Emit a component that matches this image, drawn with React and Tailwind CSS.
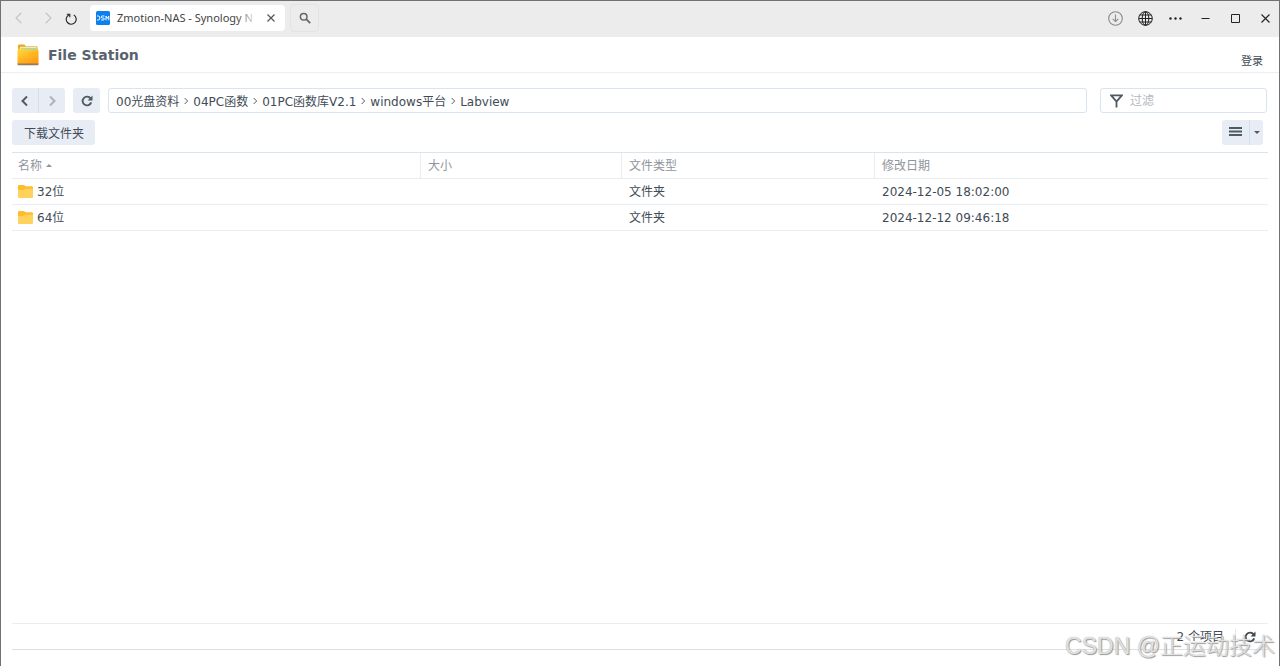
import React, { useState } from "react";

const crumbs = ["00光盘资料", "04PC函数", "01PC函数库V2.1", "windows平台", "Labview"];

const columns = [
  { name: "名称", width: "w-[409px]", sorted: true },
  { name: "大小", width: "w-[201px]" },
  { name: "文件类型", width: "w-[253px]" },
  { name: "修改日期", width: "" },
];

const files = [
  { name: "32位", size: "", type: "文件夹", modified: "2024-12-05 18:02:00" },
  { name: "64位", size: "", type: "文件夹", modified: "2024-12-12 09:46:18" },
];

function Chevron({ left, className }) {
  return (
    <svg viewBox="0 0 12 12" className={className} fill="none" stroke="currentColor" aria-hidden="true">
      <path d={left ? "M8 1.5 3.5 6 8 10.5" : "M4 1.5 8.5 6 4 10.5"} />
    </svg>
  );
}

function RefreshIcon({ className }) {
  return (
    <svg viewBox="0 0 12 12" className={className} aria-hidden="true">
      <path d="M9.6 3.4A4.4 4.4 0 1 0 10.2 7.4" fill="none" stroke="currentColor" strokeWidth="1.9" />
      <path d="M11.5.6v4.9H6.6z" fill="currentColor" />
    </svg>
  );
}

function FileStationLogo() {
  return (
    <svg viewBox="0 0 22 22" className="h-[22px] w-[22px] shrink-0" aria-hidden="true">
      <defs>
        <linearGradient id="folderFront" x1="0" y1="0" x2="0.6" y2="1">
          <stop offset="0" stopColor="#ffdb3d" />
          <stop offset="1" stopColor="#ff9d14" />
        </linearGradient>
      </defs>
      <path d="M1 2q0-1.4 1.3-1.4h5L9 2.3h10.4q1.2 0 1.2 1.3V12H1z" fill="#f5a51b" />
      <path d="M3 2.8h16.6V8H3z" fill="#e6f3d6" />
      <path d="M4 3.9h15.6V8H4z" fill="#9ed8bd" />
      <path d="M.5 6Q.5 4.700 1.700 4.700h6.100l1.500.6h10.900q1.300 0 1.300 1.300V20H.5z" fill="url(#folderFront)" />
      <path d="M.5 19.600h21v.6q0 1-1.200 1H1.700q-1.200 0-1.200-1z" fill="#94795a" />
    </svg>
  );
}

function FolderIcon() {
  return (
    <svg viewBox="0 0 15 13" className="h-[13px] w-[15px] shrink-0" aria-hidden="true">
      <path d="M0 1q0-1 1-1h5l1.600 1.300H14q1 0 1 1V12H0z" fill="#ffbd2e" />
      <path d="M0 5h5.500l1.200-1.200H15V12q0 1-1 1H1q-1 0-1-1z" fill="#ffd25c" />
    </svg>
  );
}

function BrowserBar() {
  return (
    <header className="flex h-9 shrink-0 items-center bg-[#ececec] pr-1.5 pb-0.5 pl-3 text-[#222]">
      <button type="button" aria-label="后退" className="flex w-3 justify-center text-[#c4c4c4]">
        <Chevron left className="h-3.5 w-3.5 shrink-0" />
      </button>
      <button type="button" aria-label="前进" className="ml-[17px] flex w-3 justify-center text-[#c4c4c4]">
        <Chevron className="h-3.5 w-3.5 shrink-0" />
      </button>
      <button type="button" aria-label="刷新" className="ml-[11px] flex w-3 justify-center pt-0.5">
        <svg viewBox="0 0 12 12" className="h-3 w-3" fill="none" stroke="currentColor" strokeWidth="1.1" aria-hidden="true">
          <path d="M4.200 1.700A5 5 0 1 0 8.800 2" />
          <path d="M1.800 1.300h3v3" />
        </svg>
      </button>

      <div className="ml-[13px] flex h-[26px] w-[195px] items-center rounded-sm bg-white pr-2 pl-1.5">
        <svg viewBox="0 0 14 14" className="h-3.5 w-3.5 shrink-0" aria-hidden="true">
          <rect width="14" height="14" rx="1.500" fill="#0b80ee" />
          <path
            d="M1 5h1.400q1.500 0 1.500 2T2.400 9H1M8.400 5H6.300q-1 0-1 1t1 1h1q1 0 1 1t-1 1H5.200M10 9.300V5l1.400 2.400L12.800 5v4.300"
            fill="none"
            stroke="#fff"
            strokeWidth="1"
          />
        </svg>
        <span className="relative ml-[7px] flex-1 overflow-hidden font-['Noto_Sans','Noto_Sans_CJK_SC',sans-serif] text-[11px] whitespace-nowrap text-[#444]">
          Zmotion-NAS - Synology N
          <span className="absolute inset-y-0 right-0 w-5 bg-linear-to-r from-white/0 to-white" />
        </span>
        <button type="button" aria-label="关闭标签页" className="ml-2 text-[#555]">
          <svg viewBox="0 0 12 12" className="h-3 w-3" fill="none" stroke="currentColor" strokeWidth="1.200" aria-hidden="true">
            <path d="m2.500 2.500 7 7m0-7-7 7" />
          </svg>
        </button>
      </div>
      <button
        type="button"
        aria-label="搜索"
        className="ml-[5px] flex h-7 w-[29px] items-center justify-center rounded-sm border border-[#e3e3e3] text-[#666]"
      >
        <svg viewBox="0 0 12 12" className="h-3 w-3" fill="none" stroke="currentColor" aria-hidden="true">
          <circle cx="4.700" cy="4.700" r="3.300" strokeWidth="1.500" />
          <path d="m7.200 7.200 4 4" strokeWidth="1.800" />
        </svg>
      </button>

      <div className="ml-auto flex items-center gap-[15px]">
        <button type="button" aria-label="下载" className="text-[#8a8a8a]">
          <svg viewBox="0 0 15 15" className="h-[15px] w-[15px]" fill="none" stroke="currentColor" strokeWidth="1.100" aria-hidden="true">
            <circle cx="7.500" cy="7.500" r="6.800" />
            <path d="M7.500 3.500v7M4.700 7.900l2.800 2.700 2.800-2.700" />
          </svg>
        </button>
        <button type="button" aria-label="语言">
          <svg viewBox="0 0 15 15" className="h-[15px] w-[15px]" fill="none" stroke="currentColor" strokeWidth="1" aria-hidden="true">
            <circle cx="7.500" cy="7.500" r="6.800" />
            <ellipse cx="7.500" cy="7.500" rx="3.300" ry="6.800" />
            <path d="M7.500.8v13.400M.8 7.500h13.400M1.800 4h11.400M1.800 11h11.400" />
          </svg>
        </button>
        <button type="button" aria-label="更多">
          <svg viewBox="0 0 15 15" className="h-[15px] w-[15px]" fill="currentColor" aria-hidden="true">
            <circle cx="2.500" cy="7.500" r="1.200" />
            <circle cx="7.500" cy="7.500" r="1.200" />
            <circle cx="12.500" cy="7.500" r="1.200" />
          </svg>
        </button>
        <button type="button" aria-label="最小化">
          <svg viewBox="0 0 15 15" className="h-[15px] w-[15px]" stroke="currentColor" aria-hidden="true">
            <path d="M3.500 7.500h8" />
          </svg>
        </button>
        <button type="button" aria-label="最大化">
          <svg viewBox="0 0 15 15" className="h-[15px] w-[15px]" fill="none" stroke="currentColor" aria-hidden="true">
            <path d="M3.500 3.500h8v8h-8z" />
          </svg>
        </button>
        <button type="button" aria-label="关闭">
          <svg viewBox="0 0 15 15" className="h-[15px] w-[15px]" stroke="currentColor" strokeWidth="1.100" aria-hidden="true">
            <path d="m3.500 3.500 8 8m0-8-8 8" />
          </svg>
        </button>
      </div>
    </header>
  );
}

function Toolbar() {
  const [filter, setFilter] = useState("");

  return (
    <div className="shrink-0 pt-[15px]">
      <div className="flex h-[25px] items-stretch pr-px">
        <div className="flex overflow-hidden rounded-[3px] bg-[#e8edf5]">
          <button type="button" aria-label="上一个" className="flex w-[27px] items-center justify-center border-r border-[#d6dfe9] text-[#505a64]">
            <Chevron left className="h-3 w-3 stroke-2" />
          </button>
          <button type="button" aria-label="下一个" className="flex w-[26px] items-center justify-center text-[#abb3be]">
            <Chevron className="h-3 w-3 stroke-2" />
          </button>
        </div>
        <button type="button" aria-label="重新载入" className="ml-2 flex w-[27px] items-center justify-center rounded-[3px] bg-[#e8edf5] text-[#505a64]">
          <RefreshIcon className="h-3 w-3" />
        </button>

        <nav aria-label="路径" className="ml-2 flex min-w-0 flex-1 items-center rounded-[3px] border border-[#d9e4ee] pl-[7px]">
          {crumbs.map((crumb, i) => (
            <React.Fragment key={crumb}>
              {i > 0 && <Chevron className="mx-[3px] h-2 w-2 stroke-[1.5] text-[#505a64]" />}
              <a href="#" className="pt-0.5 whitespace-nowrap">
                {crumb}
              </a>
            </React.Fragment>
          ))}
        </nav>

        <label className="ml-[13px] flex w-[167px] items-center rounded-[3px] border border-[#d9e4ee] pl-[9px]">
          <svg viewBox="0 0 13 14" className="h-3.5 w-[13px] shrink-0" fill="none" stroke="#505a64" strokeWidth="1.800" aria-hidden="true">
            <path d="M1.200 1.400h10.600L6.500 7.600zM6.500 7v6.500" />
          </svg>
          <input
            type="text"
            aria-label="过滤"
            placeholder="过滤"
            value={filter}
            onChange={(e) => setFilter(e.target.value)}
            className="ml-[7px] w-full min-w-0 bg-transparent outline-none placeholder:text-[#b4b9bf]"
          />
        </label>
      </div>

      <div className="mt-[7px] flex h-[25px] items-stretch justify-between pr-[5px]">
        <button type="button" className="rounded-[3px] bg-[#e8edf5] pt-0.5 pr-[11px] pl-3">
          下载文件夹
        </button>
        <div className="flex overflow-hidden rounded-[3px] bg-[#e8edf5]">
          <button type="button" aria-label="列表视图" className="flex w-7 items-center justify-center border-r border-[#d6dfe9] pb-0.5">
            <svg viewBox="0 0 13 9" className="h-[9px] w-[13px]" fill="#505a64" aria-hidden="true">
              <path d="M0 0h13v2H0zM0 3.500h13v2H0zM0 7h13v2H0z" />
            </svg>
          </button>
          <button type="button" aria-label="视图选项" className="flex w-[13px] items-center justify-center">
            <svg viewBox="0 0 6 3" className="h-[3px] w-1.5" fill="#505a64" aria-hidden="true">
              <path d="M0 0h6L3 3z" />
            </svg>
          </button>
        </div>
      </div>
    </div>
  );
}

function FileTable() {
  return (
    <table className="mt-[7px] w-full table-fixed border-separate border-spacing-0 border-t border-[#d9e4ec] text-left">
      <thead>
        <tr className="h-[26px] text-[#8f959b]">
          {columns.map(({ name, width, sorted }) => (
            <th
              key={name}
              scope="col"
              aria-sort={sorted ? "ascending" : undefined}
              className={`${width} border-r border-b border-[#e8edf2] px-[7px] py-0 font-normal first:pl-1.5 last:border-r-0`}
            >
              <span className="flex items-center gap-1">
                {name}
                {sorted && (
                  <svg viewBox="0 0 6 3" className="h-[3px] w-1.5" fill="currentColor" aria-hidden="true">
                    <path d="M0 3h6L3 0z" />
                  </svg>
                )}
              </span>
            </th>
          ))}
        </tr>
      </thead>
      <tbody>
        {files.map((file) => (
          <tr
            key={file.name}
            className="h-[26px] [&>td]:border-b [&>td]:border-[#e8edf2] [&>td]:py-0 [&>td]:pl-[7px] [&>td:first-child]:pl-1.5"
          >
            <td>
              <span className="flex items-center gap-1">
                <FolderIcon />
                {file.name}
              </span>
            </td>
            <td>{file.size}</td>
            <td>{file.type}</td>
            <td>{file.modified}</td>
          </tr>
        ))}
      </tbody>
    </table>
  );
}

export default function App() {
  return (
    <div className="relative flex h-screen flex-col overflow-hidden border-x border-t border-[#6f7175] bg-white font-['DejaVu_Sans','Noto_Sans_CJK_SC',sans-serif] text-xs text-[#414b55]">
      <BrowserBar />

      <div className="flex h-9 shrink-0 items-center border-b border-[#ebeef3] pr-4 pl-4">
        <FileStationLogo />
        <h1 className="ml-[9px] pt-px text-sm font-bold text-[#58636e]">File Station</h1>
        <a href="#" className="ml-auto self-end pb-0.5 text-[11px]">
          登录
        </a>
      </div>

      <main className="flex min-h-0 flex-1 flex-col pr-[11px] pb-4 pl-[11px]">
        <Toolbar />
        <div className="min-h-0 flex-1 overflow-hidden">
          <FileTable />
        </div>
        <footer className="flex h-[27px] shrink-0 items-center justify-end border-t border-b border-t-[#ebedef] border-b-[#d9e0e7] pr-3">
          <span>2 个项目</span>
          <span className="ml-[11px] h-4 border-l border-[#e2e7ec]" />
          <button type="button" aria-label="刷新列表" className="ml-2 text-[#414b55]">
            <RefreshIcon className="h-3 w-3" />
          </button>
        </footer>
      </main>

      <p className="pointer-events-none absolute right-1 bottom-1 font-['Liberation_Sans','Noto_Sans_CJK_SC',sans-serif] text-[23px] font-light whitespace-nowrap text-white/70 [text-shadow:1px_1px_1px_#999,0_0_1px_#999]">
        CSDN @正运动技术
      </p>
    </div>
  );
}
